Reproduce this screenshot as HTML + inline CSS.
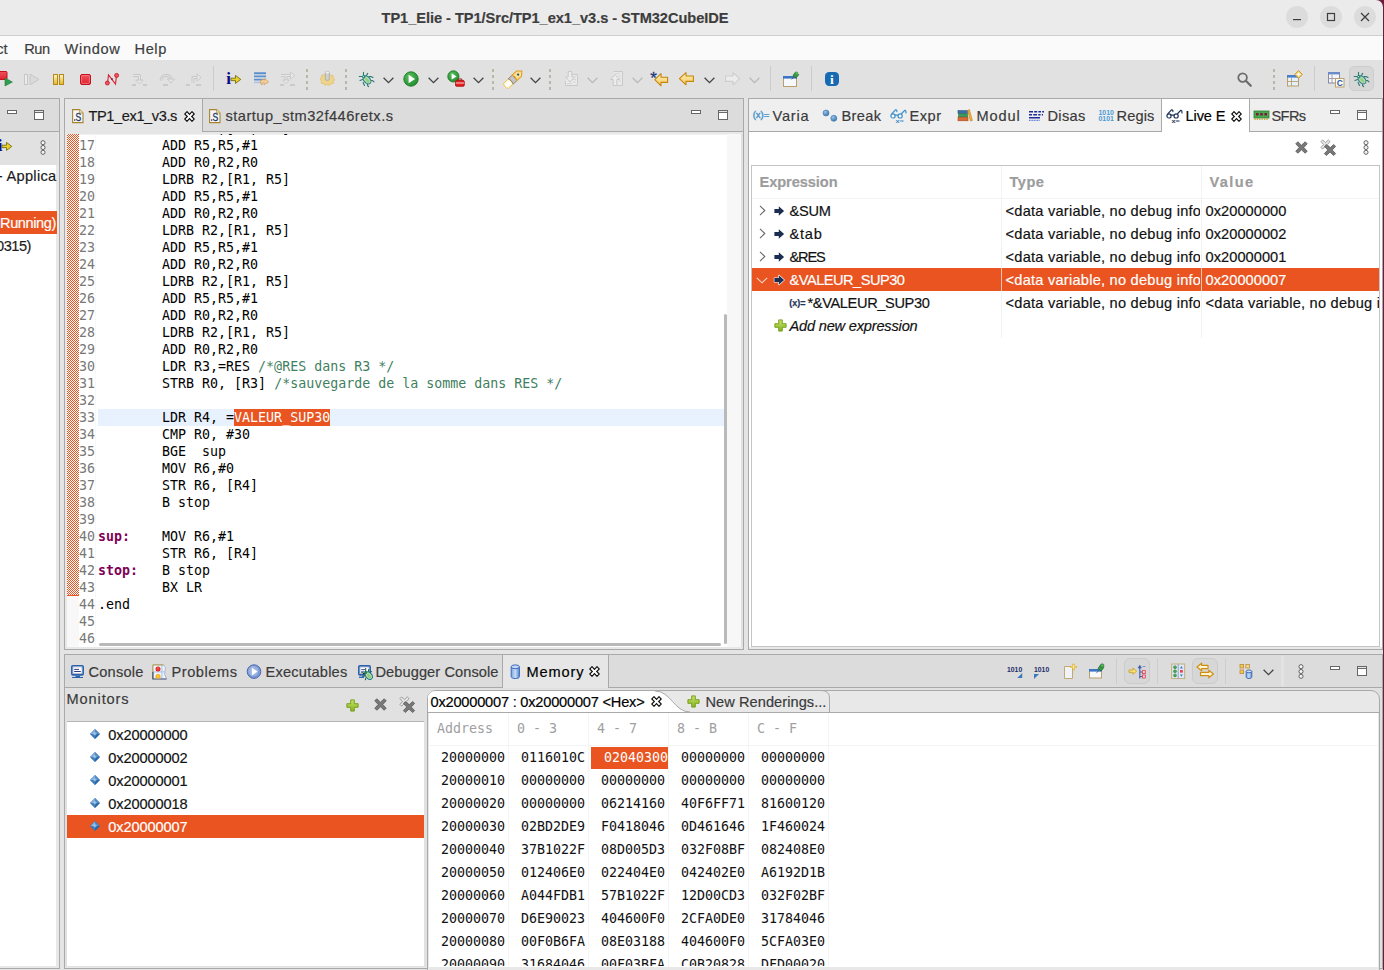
<!DOCTYPE html>
<html><head><meta charset="utf-8"><title>TP1_Elie - STM32CubeIDE</title><style>
html,body{margin:0;padding:0}
body{background:#6d1c3a;width:1384px;height:970px;overflow:hidden;font-family:'Liberation Sans', sans-serif}
#w{position:absolute;left:0;top:0;width:1384px;height:970px;overflow:hidden}
#w div,#w svg{position:absolute}
.t{white-space:pre;line-height:16px;height:16px;-webkit-text-stroke:.18px currentColor}
.cl{left:0;height:17px;line-height:17px;white-space:pre;font-family:'DejaVu Sans Mono', 'Liberation Mono', monospace;font-size:13.3px;color:#000}
.cl span{display:inline-block;height:17px;vertical-align:top}
.ln{width:16px;margin-left:12px;margin-right:3px;color:#787878}
.c{color:#3f7f5f} .l{color:#7f0055;font-weight:700} .w{color:#fff}
</style></head><body><div id="w">
<div style="left:0px;top:0px;width:1383px;height:36px;background:#ebebeb;border-top-right-radius:7px;"></div>
<div style="left:0px;top:35px;width:1383px;height:1px;background:#cfcfcf;"></div>
<div style="left:0px;top:36px;width:1383px;height:24px;background:#fafafa;"></div>
<div style="left:0px;top:60px;width:1383px;height:910px;background:#e4e4e4;"></div>
<div style="left:0px;top:60px;width:1383px;height:38px;background:#e1e1e1;"></div>
<div class="t" style="left:381.5px;top:10px;font-size:14.6px;color:#3d3d3d;font-weight:700;letter-spacing:-0.039px;">TP1_Elie - TP1/Src/TP1_ex1_v3.s - STM32CubeIDE</div>
<div style="left:1286px;top:6px;width:22px;height:22px;border-radius:11px;background:#dcdcdc"></div>
<div style="left:1320px;top:6px;width:22px;height:22px;border-radius:11px;background:#dcdcdc"></div>
<div style="left:1354px;top:6px;width:22px;height:22px;border-radius:11px;background:#dcdcdc"></div>
<svg style="left:1286px;top:6px" width="90" height="22" viewBox="0 0 90 22"><path d="M7 13.600H15" stroke="#3d3d3d" stroke-width="1.2" fill="none"/><rect x="41.5" y="7.5" width="7" height="7" stroke="#3d3d3d" stroke-width="1.2" fill="none"/><path d="M75 7L83 15M83 7L75 15" stroke="#3d3d3d" stroke-width="1.2" fill="none"/></svg>
<div class="t" style="left:-3.8px;top:41px;font-size:14.6px;color:#3d3d3d;">ct</div>
<div class="t" style="left:24.2px;top:41px;font-size:14.6px;color:#3d3d3d;letter-spacing:-0.394px;">Run</div>
<div class="t" style="left:64.5px;top:41px;font-size:14.6px;color:#3d3d3d;letter-spacing:0.682px;">Window</div>
<div class="t" style="left:134.6px;top:41px;font-size:14.6px;color:#3d3d3d;letter-spacing:0.546px;">Help</div>
<div style="left:-40px;top:98px;width:100px;height:871px;background:#e8e8e8;box-sizing:border-box;border:1px solid #a9a9a9;"></div>
<div style="left:-39px;top:99px;width:98px;height:32px;background:#dcdcdc;"></div>
<div style="left:-39px;top:131px;width:98px;height:1px;background:#a9a9a9;"></div>
<div style="left:-38px;top:132px;width:96px;height:33px;background:#e1e1e1;"></div>
<div style="left:-38px;top:165px;width:94px;height:801px;background:#fff;"></div>
<div style="left:64px;top:98px;width:680px;height:552px;background:#e8e8e8;box-sizing:border-box;border:1px solid #a9a9a9;"></div>
<div style="left:65px;top:99px;width:678px;height:32px;background:#dcdcdc;"></div>
<div style="left:65px;top:131px;width:678px;height:1px;background:#a9a9a9;"></div>
<div style="left:748px;top:98px;width:635px;height:552px;background:#e8e8e8;box-sizing:border-box;border:1px solid #a9a9a9;"></div>
<div style="left:749px;top:99px;width:633px;height:32px;background:#efefef;"></div>
<div style="left:749px;top:131px;width:633px;height:1px;background:#a9a9a9;"></div>
<div style="left:64px;top:654px;width:1319px;height:315px;background:#e8e8e8;box-sizing:border-box;border:1px solid #a9a9a9;"></div>
<div style="left:65px;top:655px;width:1317px;height:32px;background:#dcdcdc;"></div>
<div style="left:65px;top:687px;width:1317px;height:1px;background:#a9a9a9;"></div>
<div class="t" style="left:-2.2px;top:168px;font-size:14.6px;color:#1a1a1a;letter-spacing:0.291px;">- Applica</div>
<div style="left:0px;top:211px;width:57px;height:23px;background:#e95420;"></div>
<div class="t" style="left:0px;top:215px;font-size:14.6px;color:#fff;letter-spacing:-0.404px;">Running)</div>
<div class="t" style="left:-4px;top:238px;font-size:14.6px;color:#1a1a1a;letter-spacing:-0.466px;">0315)</div>
<div style="left:65px;top:99px;width:138px;height:35px;background:#e6e6e6;"></div>
<div style="left:202px;top:99px;width:1px;height:33px;background:#a9a9a9;"></div>
<div class="t" style="left:88.5px;top:108px;font-size:14.6px;color:#1a1a1a;letter-spacing:-0.400px;">TP1_ex1_v3.s</div>
<div class="t" style="left:225.5px;top:108px;font-size:14.6px;color:#3a3a3a;letter-spacing:0.497px;">startup_stm32f446retx.s</div>
<div style="left:67px;top:134px;width:675px;height:1px;background:#f1f1f1;"></div>
<div style="left:67px;top:135px;width:675px;height:512px;background:#fff;"></div>
<div style="left:67px;top:134px;width:12px;height:462px;background:#f4aa90;background-image:repeating-conic-gradient(#e95420 0% 25%, #fff 0% 50%);background-size:2px 2px;"></div>
<div style="left:67px;top:595px;width:12px;height:1px;background:#e95420;"></div>
<div style="left:67px;top:596px;width:12px;height:51px;background:#f8f8f8;"></div>
<div style="left:95px;top:135px;width:1px;height:512px;background:#f8f8f8;"></div>
<div style="left:727px;top:134px;width:14px;height:513px;background:#f7f7f7;"></div>
<div style="left:741px;top:134px;width:2px;height:513px;background:#e0e0e0;"></div>
<div style="left:98px;top:409px;width:629px;height:17px;background:#e8f2fe;"></div>
<div style="left:234px;top:409px;width:96px;height:17px;background:#e95420;"></div>
<div style="left:724px;top:314px;width:3px;height:330px;background:#b9b9b9;border-radius:2px;"></div>
<div style="left:99px;top:643px;width:622px;height:3px;background:#b9b9b9;border-radius:2px;"></div>
<div style="left:67px;top:134px;width:660px;height:513px;overflow:hidden">
<div class="cl" style="top:-14px"><span class="ln">16</span><span class="k">        LDRB R2,[R1, R5]</span></div>
<div class="cl" style="top:3px"><span class="ln">17</span><span class="k">        ADD R5,R5,#1</span></div>
<div class="cl" style="top:20px"><span class="ln">18</span><span class="k">        ADD R0,R2,R0</span></div>
<div class="cl" style="top:37px"><span class="ln">19</span><span class="k">        LDRB R2,[R1, R5]</span></div>
<div class="cl" style="top:54px"><span class="ln">20</span><span class="k">        ADD R5,R5,#1</span></div>
<div class="cl" style="top:71px"><span class="ln">21</span><span class="k">        ADD R0,R2,R0</span></div>
<div class="cl" style="top:88px"><span class="ln">22</span><span class="k">        LDRB R2,[R1, R5]</span></div>
<div class="cl" style="top:105px"><span class="ln">23</span><span class="k">        ADD R5,R5,#1</span></div>
<div class="cl" style="top:122px"><span class="ln">24</span><span class="k">        ADD R0,R2,R0</span></div>
<div class="cl" style="top:139px"><span class="ln">25</span><span class="k">        LDRB R2,[R1, R5]</span></div>
<div class="cl" style="top:156px"><span class="ln">26</span><span class="k">        ADD R5,R5,#1</span></div>
<div class="cl" style="top:173px"><span class="ln">27</span><span class="k">        ADD R0,R2,R0</span></div>
<div class="cl" style="top:190px"><span class="ln">28</span><span class="k">        LDRB R2,[R1, R5]</span></div>
<div class="cl" style="top:207px"><span class="ln">29</span><span class="k">        ADD R0,R2,R0</span></div>
<div class="cl" style="top:224px"><span class="ln">30</span><span class="k">        LDR R3,=RES </span><span class="c">/*@RES dans R3 */</span></div>
<div class="cl" style="top:241px"><span class="ln">31</span><span class="k">        STRB R0, [R3] </span><span class="c">/*sauvegarde de la somme dans RES */</span></div>
<div class="cl" style="top:258px"><span class="ln">32</span></div>
<div class="cl" style="top:275px"><span class="ln">33</span><span class="k">        LDR R4, =</span><span class="w">VALEUR_SUP30</span></div>
<div class="cl" style="top:292px"><span class="ln">34</span><span class="k">        CMP R0, #30</span></div>
<div class="cl" style="top:309px"><span class="ln">35</span><span class="k">        BGE  sup</span></div>
<div class="cl" style="top:326px"><span class="ln">36</span><span class="k">        MOV R6,#0</span></div>
<div class="cl" style="top:343px"><span class="ln">37</span><span class="k">        STR R6, [R4]</span></div>
<div class="cl" style="top:360px"><span class="ln">38</span><span class="k">        B stop</span></div>
<div class="cl" style="top:377px"><span class="ln">39</span></div>
<div class="cl" style="top:394px"><span class="ln">40</span><span class="l">sup:</span><span class="k">    MOV R6,#1</span></div>
<div class="cl" style="top:411px"><span class="ln">41</span><span class="k">        STR R6, [R4]</span></div>
<div class="cl" style="top:428px"><span class="ln">42</span><span class="l">stop:</span><span class="k">   B stop</span></div>
<div class="cl" style="top:445px"><span class="ln">43</span><span class="k">        BX LR</span></div>
<div class="cl" style="top:462px"><span class="ln">44</span><span class="k">.end</span></div>
<div class="cl" style="top:479px"><span class="ln">45</span></div>
<div class="cl" style="top:496px"><span class="ln">46</span></div>
</div>
<div style="left:1161px;top:99px;width:1px;height:33px;background:#a9a9a9;"></div>
<div style="left:1162px;top:99px;width:87px;height:35px;background:#fff;"></div>
<div style="left:1249px;top:99px;width:1px;height:33px;background:#a9a9a9;"></div>
<div style="left:749px;top:132px;width:633px;height:515px;background:#fff;"></div>
<div class="t" style="left:772.5px;top:108px;font-size:14.6px;color:#3a3a3a;letter-spacing:0.800px;">Varia</div>
<div class="t" style="left:841.5px;top:108px;font-size:14.6px;color:#3a3a3a;letter-spacing:0.375px;">Break</div>
<div class="t" style="left:909.5px;top:108px;font-size:14.6px;color:#3a3a3a;letter-spacing:0.496px;">Expr</div>
<div class="t" style="left:976.5px;top:108px;font-size:14.6px;color:#3a3a3a;letter-spacing:0.850px;">Modul</div>
<div class="t" style="left:1047.5px;top:108px;font-size:14.6px;color:#3a3a3a;letter-spacing:0.300px;">Disas</div>
<div class="t" style="left:1116.5px;top:108px;font-size:14.6px;color:#3a3a3a;letter-spacing:0.138px;">Regis</div>
<div class="t" style="left:1185.5px;top:108px;font-size:14.6px;color:#000;letter-spacing:-0.094px;">Live E</div>
<div class="t" style="left:1271.5px;top:108px;font-size:14.6px;color:#3a3a3a;letter-spacing:-0.621px;">SFRs</div>
<div style="left:751px;top:165px;width:629px;height:482px;background:#fff;box-sizing:border-box;border:1px solid #c4c4c4;"></div>
<div style="left:752px;top:198px;width:627px;height:1px;background:#f4f4f4;"></div>
<div style="left:1001px;top:166px;width:1px;height:172px;background:#f2f2f2;"></div>
<div style="left:1201px;top:166px;width:1px;height:172px;background:#f2f2f2;"></div>
<div class="t" style="left:759.5px;top:174px;font-size:14.6px;color:#9c9c9c;font-weight:700;letter-spacing:-0.069px;">Expression</div>
<div class="t" style="left:1009.5px;top:174px;font-size:14.6px;color:#9c9c9c;font-weight:700;letter-spacing:0.504px;">Type</div>
<div class="t" style="left:1209.5px;top:174px;font-size:14.6px;color:#9c9c9c;font-weight:700;letter-spacing:1.372px;">Value</div>
<div style="left:752px;top:268px;width:627px;height:23px;background:#e95420;"></div>
<div style="left:1001px;top:268px;width:1px;height:23px;background:#f6c3b0;"></div>
<div style="left:1201px;top:268px;width:1px;height:23px;background:#f6c3b0;"></div>
<div class="t" style="left:789.5px;top:203px;font-size:14.6px;color:#111;letter-spacing:-0.293px;">&amp;SUM</div>
<div style="left:1002px;top:199px;width:198px;height:23px;overflow:hidden">
<div class="t" style="left:3.5px;top:4px;font-size:14.6px;color:#111;letter-spacing:0.244px;">&lt;data variable, no debug info&gt;</div>
</div>
<div class="t" style="left:1205.5px;top:203px;font-size:14.6px;color:#111;letter-spacing:0.064px;">0x20000000</div>
<div class="t" style="left:789.5px;top:226px;font-size:14.6px;color:#111;letter-spacing:0.742px;">&amp;tab</div>
<div style="left:1002px;top:222px;width:198px;height:23px;overflow:hidden">
<div class="t" style="left:3.5px;top:4px;font-size:14.6px;color:#111;letter-spacing:0.244px;">&lt;data variable, no debug info&gt;</div>
</div>
<div class="t" style="left:1205.5px;top:226px;font-size:14.6px;color:#111;letter-spacing:0.064px;">0x20000002</div>
<div class="t" style="left:789.5px;top:249px;font-size:14.6px;color:#111;letter-spacing:-1.188px;">&amp;RES</div>
<div style="left:1002px;top:245px;width:198px;height:23px;overflow:hidden">
<div class="t" style="left:3.5px;top:4px;font-size:14.6px;color:#111;letter-spacing:0.244px;">&lt;data variable, no debug info&gt;</div>
</div>
<div class="t" style="left:1205.5px;top:249px;font-size:14.6px;color:#111;letter-spacing:0.064px;">0x20000001</div>
<div class="t" style="left:789.5px;top:272px;font-size:14.6px;color:#fff;letter-spacing:-0.493px;">&amp;VALEUR_SUP30</div>
<div style="left:1002px;top:268px;width:198px;height:23px;overflow:hidden">
<div class="t" style="left:3.5px;top:4px;font-size:14.6px;color:#fff;letter-spacing:0.244px;">&lt;data variable, no debug info&gt;</div>
</div>
<div class="t" style="left:1205.5px;top:272px;font-size:14.6px;color:#fff;letter-spacing:0.064px;">0x20000007</div>
<div class="t" style="left:807.5px;top:295px;font-size:14.6px;color:#111;letter-spacing:-0.364px;">*&amp;VALEUR_SUP30</div>
<div style="left:1002px;top:291px;width:198px;height:23px;overflow:hidden">
<div class="t" style="left:3.5px;top:4px;font-size:14.6px;color:#111;letter-spacing:0.244px;">&lt;data variable, no debug info&gt;</div>
</div>
<div style="left:1202px;top:291px;width:177px;height:23px;overflow:hidden">
<div class="t" style="left:3.5px;top:4px;font-size:14.6px;color:#111;letter-spacing:0.244px;">&lt;data variable, no debug info&gt;</div>
</div>
<div class="t" style="left:789.5px;top:318px;font-size:14.6px;color:#111;font-style:italic;letter-spacing:-0.191px;">Add new expression</div>
<div style="left:502px;top:655px;width:107px;height:33px;background:#e6e6e6;"></div>
<div style="left:502px;top:655px;width:1px;height:33px;background:#a9a9a9;"></div>
<div style="left:608px;top:655px;width:1px;height:33px;background:#a9a9a9;"></div>
<div class="t" style="left:88.5px;top:664px;font-size:14.6px;color:#3a3a3a;letter-spacing:0.208px;">Console</div>
<div class="t" style="left:171.5px;top:664px;font-size:14.6px;color:#3a3a3a;letter-spacing:0.545px;">Problems</div>
<div class="t" style="left:265.5px;top:664px;font-size:14.6px;color:#3a3a3a;letter-spacing:0.226px;">Executables</div>
<div class="t" style="left:375.5px;top:664px;font-size:14.6px;color:#3a3a3a;letter-spacing:0.081px;">Debugger Console</div>
<div class="t" style="left:526.5px;top:664px;font-size:14.6px;color:#000;letter-spacing:0.883px;">Memory</div>
<div style="left:65px;top:688px;width:1317px;height:279px;background:#e1e1e1;"></div>
<div class="t" style="left:66.5px;top:691px;font-size:14.6px;color:#3a3a3a;letter-spacing:0.879px;">Monitors</div>
<div style="left:67px;top:721px;width:357px;height:1px;background:#b4b4b4;"></div>
<div style="left:67px;top:722px;width:357px;height:244px;background:#fff;"></div>
<div style="left:67px;top:815px;width:357px;height:23px;background:#e95420;"></div>
<div class="t" style="left:108.2px;top:727px;font-size:14.6px;color:#111;letter-spacing:-0.096px;">0x20000000</div>
<div class="t" style="left:108.2px;top:750px;font-size:14.6px;color:#111;letter-spacing:-0.096px;">0x20000002</div>
<div class="t" style="left:108.2px;top:773px;font-size:14.6px;color:#111;letter-spacing:-0.096px;">0x20000001</div>
<div class="t" style="left:108.2px;top:796px;font-size:14.6px;color:#111;letter-spacing:-0.096px;">0x20000018</div>
<div class="t" style="left:108.2px;top:819px;font-size:14.6px;color:#fff;letter-spacing:-0.096px;">0x20000007</div>
<div style="left:427px;top:690px;width:953px;height:290px;background:#e8e8e8;box-sizing:border-box;border:1px solid #a9a9a9;border-radius:9px 9px 0 0"></div>
<div style="left:428px;top:712px;width:951px;height:1px;background:#a9a9a9;"></div>
<div style="left:429px;top:713px;width:949px;height:254px;background:#fff;"></div>
<svg style="left:428px;top:691px" width="264" height="22" viewBox="0 0 264 22"><path d="M0 21V8Q0 0 8 0H227C243 0 246 21 262 21Z" fill="#fff"/><path d="M227 0C243 0 246 21 262 21" fill="none" stroke="#a9a9a9"/></svg>
<svg style="left:670px;top:690px" width="170" height="23" viewBox="0 0 170 23"><path d="M159.500 22V8Q159.500 0.500 151 0.500" fill="none" stroke="#a9a9a9"/></svg>
<div class="t" style="left:430.5px;top:694px;font-size:14.6px;color:#000;letter-spacing:-0.204px;">0x20000007 : 0x20000007 &lt;Hex&gt;</div>
<div class="t" style="left:705.5px;top:694px;font-size:14.6px;color:#3a3a3a;letter-spacing:0.055px;">New Renderings...</div>
<div style="left:508px;top:713px;width:1px;height:254px;background:#f5f5f5;"></div>
<div style="left:588px;top:713px;width:1px;height:254px;background:#f5f5f5;"></div>
<div style="left:668px;top:713px;width:1px;height:254px;background:#f5f5f5;"></div>
<div style="left:748px;top:713px;width:1px;height:254px;background:#f5f5f5;"></div>
<div style="left:828px;top:713px;width:1px;height:254px;background:#f5f5f5;"></div>
<div style="left:429px;top:745px;width:949px;height:1px;background:#f4f4f4;"></div>
<div class="t" style="left:437px;top:720.5px;font-size:13.3px;color:#a0a0a0;font-family:'DejaVu Sans Mono', 'Liberation Mono', monospace;-webkit-text-stroke:0;">Address</div>
<div class="t" style="left:517px;top:720.5px;font-size:13.3px;color:#a0a0a0;font-family:'DejaVu Sans Mono', 'Liberation Mono', monospace;-webkit-text-stroke:0;">0 - 3</div>
<div class="t" style="left:597px;top:720.5px;font-size:13.3px;color:#a0a0a0;font-family:'DejaVu Sans Mono', 'Liberation Mono', monospace;-webkit-text-stroke:0;">4 - 7</div>
<div class="t" style="left:677px;top:720.5px;font-size:13.3px;color:#a0a0a0;font-family:'DejaVu Sans Mono', 'Liberation Mono', monospace;-webkit-text-stroke:0;">8 - B</div>
<div class="t" style="left:757px;top:720.5px;font-size:13.3px;color:#a0a0a0;font-family:'DejaVu Sans Mono', 'Liberation Mono', monospace;-webkit-text-stroke:0;">C - F</div>
<div style="left:591px;top:747px;width:77px;height:22px;background:#e95420;"></div>
<div style="left:429px;top:713px;width:950px;height:253px;overflow:hidden">
<div class="t" style="left:12px;top:36.5px;font-size:13.3px;color:#111;font-family:'DejaVu Sans Mono', 'Liberation Mono', monospace;-webkit-text-stroke:0;">20000000</div>
<div class="t" style="left:92px;top:36.5px;font-size:13.3px;color:#111;font-family:'DejaVu Sans Mono', 'Liberation Mono', monospace;-webkit-text-stroke:0;">0116010C</div>
<div class="t" style="left:175px;top:36.5px;font-size:13.3px;color:#fff;font-family:'DejaVu Sans Mono', 'Liberation Mono', monospace;-webkit-text-stroke:0;">02040300</div>
<div class="t" style="left:252px;top:36.5px;font-size:13.3px;color:#111;font-family:'DejaVu Sans Mono', 'Liberation Mono', monospace;-webkit-text-stroke:0;">00000000</div>
<div class="t" style="left:332px;top:36.5px;font-size:13.3px;color:#111;font-family:'DejaVu Sans Mono', 'Liberation Mono', monospace;-webkit-text-stroke:0;">00000000</div>
<div class="t" style="left:12px;top:59.5px;font-size:13.3px;color:#111;font-family:'DejaVu Sans Mono', 'Liberation Mono', monospace;-webkit-text-stroke:0;">20000010</div>
<div class="t" style="left:92px;top:59.5px;font-size:13.3px;color:#111;font-family:'DejaVu Sans Mono', 'Liberation Mono', monospace;-webkit-text-stroke:0;">00000000</div>
<div class="t" style="left:172px;top:59.5px;font-size:13.3px;color:#111;font-family:'DejaVu Sans Mono', 'Liberation Mono', monospace;-webkit-text-stroke:0;">00000000</div>
<div class="t" style="left:252px;top:59.5px;font-size:13.3px;color:#111;font-family:'DejaVu Sans Mono', 'Liberation Mono', monospace;-webkit-text-stroke:0;">00000000</div>
<div class="t" style="left:332px;top:59.5px;font-size:13.3px;color:#111;font-family:'DejaVu Sans Mono', 'Liberation Mono', monospace;-webkit-text-stroke:0;">00000000</div>
<div class="t" style="left:12px;top:82.5px;font-size:13.3px;color:#111;font-family:'DejaVu Sans Mono', 'Liberation Mono', monospace;-webkit-text-stroke:0;">20000020</div>
<div class="t" style="left:92px;top:82.5px;font-size:13.3px;color:#111;font-family:'DejaVu Sans Mono', 'Liberation Mono', monospace;-webkit-text-stroke:0;">00000000</div>
<div class="t" style="left:172px;top:82.5px;font-size:13.3px;color:#111;font-family:'DejaVu Sans Mono', 'Liberation Mono', monospace;-webkit-text-stroke:0;">06214160</div>
<div class="t" style="left:252px;top:82.5px;font-size:13.3px;color:#111;font-family:'DejaVu Sans Mono', 'Liberation Mono', monospace;-webkit-text-stroke:0;">40F6FF71</div>
<div class="t" style="left:332px;top:82.5px;font-size:13.3px;color:#111;font-family:'DejaVu Sans Mono', 'Liberation Mono', monospace;-webkit-text-stroke:0;">81600120</div>
<div class="t" style="left:12px;top:105.5px;font-size:13.3px;color:#111;font-family:'DejaVu Sans Mono', 'Liberation Mono', monospace;-webkit-text-stroke:0;">20000030</div>
<div class="t" style="left:92px;top:105.5px;font-size:13.3px;color:#111;font-family:'DejaVu Sans Mono', 'Liberation Mono', monospace;-webkit-text-stroke:0;">02BD2DE9</div>
<div class="t" style="left:172px;top:105.5px;font-size:13.3px;color:#111;font-family:'DejaVu Sans Mono', 'Liberation Mono', monospace;-webkit-text-stroke:0;">F0418046</div>
<div class="t" style="left:252px;top:105.5px;font-size:13.3px;color:#111;font-family:'DejaVu Sans Mono', 'Liberation Mono', monospace;-webkit-text-stroke:0;">0D461646</div>
<div class="t" style="left:332px;top:105.5px;font-size:13.3px;color:#111;font-family:'DejaVu Sans Mono', 'Liberation Mono', monospace;-webkit-text-stroke:0;">1F460024</div>
<div class="t" style="left:12px;top:128.5px;font-size:13.3px;color:#111;font-family:'DejaVu Sans Mono', 'Liberation Mono', monospace;-webkit-text-stroke:0;">20000040</div>
<div class="t" style="left:92px;top:128.5px;font-size:13.3px;color:#111;font-family:'DejaVu Sans Mono', 'Liberation Mono', monospace;-webkit-text-stroke:0;">37B1022F</div>
<div class="t" style="left:172px;top:128.5px;font-size:13.3px;color:#111;font-family:'DejaVu Sans Mono', 'Liberation Mono', monospace;-webkit-text-stroke:0;">08D005D3</div>
<div class="t" style="left:252px;top:128.5px;font-size:13.3px;color:#111;font-family:'DejaVu Sans Mono', 'Liberation Mono', monospace;-webkit-text-stroke:0;">032F08BF</div>
<div class="t" style="left:332px;top:128.5px;font-size:13.3px;color:#111;font-family:'DejaVu Sans Mono', 'Liberation Mono', monospace;-webkit-text-stroke:0;">082408E0</div>
<div class="t" style="left:12px;top:151.5px;font-size:13.3px;color:#111;font-family:'DejaVu Sans Mono', 'Liberation Mono', monospace;-webkit-text-stroke:0;">20000050</div>
<div class="t" style="left:92px;top:151.5px;font-size:13.3px;color:#111;font-family:'DejaVu Sans Mono', 'Liberation Mono', monospace;-webkit-text-stroke:0;">012406E0</div>
<div class="t" style="left:172px;top:151.5px;font-size:13.3px;color:#111;font-family:'DejaVu Sans Mono', 'Liberation Mono', monospace;-webkit-text-stroke:0;">022404E0</div>
<div class="t" style="left:252px;top:151.5px;font-size:13.3px;color:#111;font-family:'DejaVu Sans Mono', 'Liberation Mono', monospace;-webkit-text-stroke:0;">042402E0</div>
<div class="t" style="left:332px;top:151.5px;font-size:13.3px;color:#111;font-family:'DejaVu Sans Mono', 'Liberation Mono', monospace;-webkit-text-stroke:0;">A6192D1B</div>
<div class="t" style="left:12px;top:174.5px;font-size:13.3px;color:#111;font-family:'DejaVu Sans Mono', 'Liberation Mono', monospace;-webkit-text-stroke:0;">20000060</div>
<div class="t" style="left:92px;top:174.5px;font-size:13.3px;color:#111;font-family:'DejaVu Sans Mono', 'Liberation Mono', monospace;-webkit-text-stroke:0;">A044FDB1</div>
<div class="t" style="left:172px;top:174.5px;font-size:13.3px;color:#111;font-family:'DejaVu Sans Mono', 'Liberation Mono', monospace;-webkit-text-stroke:0;">57B1022F</div>
<div class="t" style="left:252px;top:174.5px;font-size:13.3px;color:#111;font-family:'DejaVu Sans Mono', 'Liberation Mono', monospace;-webkit-text-stroke:0;">12D00CD3</div>
<div class="t" style="left:332px;top:174.5px;font-size:13.3px;color:#111;font-family:'DejaVu Sans Mono', 'Liberation Mono', monospace;-webkit-text-stroke:0;">032F02BF</div>
<div class="t" style="left:12px;top:197.5px;font-size:13.3px;color:#111;font-family:'DejaVu Sans Mono', 'Liberation Mono', monospace;-webkit-text-stroke:0;">20000070</div>
<div class="t" style="left:92px;top:197.5px;font-size:13.3px;color:#111;font-family:'DejaVu Sans Mono', 'Liberation Mono', monospace;-webkit-text-stroke:0;">D6E90023</div>
<div class="t" style="left:172px;top:197.5px;font-size:13.3px;color:#111;font-family:'DejaVu Sans Mono', 'Liberation Mono', monospace;-webkit-text-stroke:0;">404600F0</div>
<div class="t" style="left:252px;top:197.5px;font-size:13.3px;color:#111;font-family:'DejaVu Sans Mono', 'Liberation Mono', monospace;-webkit-text-stroke:0;">2CFA0DE0</div>
<div class="t" style="left:332px;top:197.5px;font-size:13.3px;color:#111;font-family:'DejaVu Sans Mono', 'Liberation Mono', monospace;-webkit-text-stroke:0;">31784046</div>
<div class="t" style="left:12px;top:220.5px;font-size:13.3px;color:#111;font-family:'DejaVu Sans Mono', 'Liberation Mono', monospace;-webkit-text-stroke:0;">20000080</div>
<div class="t" style="left:92px;top:220.5px;font-size:13.3px;color:#111;font-family:'DejaVu Sans Mono', 'Liberation Mono', monospace;-webkit-text-stroke:0;">00F0B6FA</div>
<div class="t" style="left:172px;top:220.5px;font-size:13.3px;color:#111;font-family:'DejaVu Sans Mono', 'Liberation Mono', monospace;-webkit-text-stroke:0;">08E03188</div>
<div class="t" style="left:252px;top:220.5px;font-size:13.3px;color:#111;font-family:'DejaVu Sans Mono', 'Liberation Mono', monospace;-webkit-text-stroke:0;">404600F0</div>
<div class="t" style="left:332px;top:220.5px;font-size:13.3px;color:#111;font-family:'DejaVu Sans Mono', 'Liberation Mono', monospace;-webkit-text-stroke:0;">5CFA03E0</div>
<div class="t" style="left:12px;top:243.5px;font-size:13.3px;color:#111;font-family:'DejaVu Sans Mono', 'Liberation Mono', monospace;-webkit-text-stroke:0;">20000090</div>
<div class="t" style="left:92px;top:243.5px;font-size:13.3px;color:#111;font-family:'DejaVu Sans Mono', 'Liberation Mono', monospace;-webkit-text-stroke:0;">31684046</div>
<div class="t" style="left:172px;top:243.5px;font-size:13.3px;color:#111;font-family:'DejaVu Sans Mono', 'Liberation Mono', monospace;-webkit-text-stroke:0;">00F03BFA</div>
<div class="t" style="left:252px;top:243.5px;font-size:13.3px;color:#111;font-family:'DejaVu Sans Mono', 'Liberation Mono', monospace;-webkit-text-stroke:0;">C0B20828</div>
<div class="t" style="left:332px;top:243.5px;font-size:13.3px;color:#111;font-family:'DejaVu Sans Mono', 'Liberation Mono', monospace;-webkit-text-stroke:0;">DFD00020</div>
</div>
<svg width="0" height="0" style="left:0;top:0"><defs>
<linearGradient id="gy" x1="0" y1="0" x2="0" y2="1"><stop offset="0" stop-color="#fff6cf"/><stop offset="1" stop-color="#e6b422"/></linearGradient>
<linearGradient id="gr" x1="0" y1="0" x2="0" y2="1"><stop offset="0" stop-color="#f0535c"/><stop offset="1" stop-color="#dd2230"/></linearGradient>
<radialGradient id="gg" cx="0.4" cy="0.35" r="0.7"><stop offset="0" stop-color="#5cc060"/><stop offset="1" stop-color="#1e8a2c"/></radialGradient>
<linearGradient id="ga" x1="0" y1="0" x2="0" y2="1"><stop offset="0" stop-color="#fff3c4"/><stop offset="1" stop-color="#f4c552"/></linearGradient>
<linearGradient id="gb" x1="0" y1="0" x2="1" y2="0"><stop offset="0" stop-color="#7aa7e0"/><stop offset="0.5" stop-color="#c8dcf6"/><stop offset="1" stop-color="#5a88cc"/></linearGradient>
<linearGradient id="gp" x1="0" y1="0" x2="0" y2="1"><stop offset="0" stop-color="#c6e36a"/><stop offset="1" stop-color="#86b41e"/></linearGradient>
<radialGradient id="gd" cx="0.35" cy="0.3" r="0.8"><stop offset="0" stop-color="#9cc4ea"/><stop offset="1" stop-color="#2f6eaa"/></radialGradient>
</defs></svg>
<svg style="left:7px;top:110px" width="10" height="4" viewBox="0 0 10 4"><rect x=".5" y=".5" width="9" height="3" fill="#fff" stroke="#666"/></svg>
<svg style="left:34px;top:110px" width="10" height="10" viewBox="0 0 10 10"><rect x=".5" y=".5" width="9" height="9" fill="#fff" stroke="#666"/><path d="M1 2.500H9" stroke="#6a6a6a"/><path d="M1 1.500H9" stroke="#e6e6e6"/></svg>
<svg style="left:39.5px;top:140px" width="6" height="15" viewBox="0 0 6 15"><g fill="#f4f4f4" stroke="#555" stroke-width=".9"><circle cx="3" cy="2.700" r="2.050"/><circle cx="3" cy="7.500" r="2.050"/><circle cx="3" cy="12.300" r="2.050"/></g></svg>
<svg style="left:691px;top:110px" width="10" height="4" viewBox="0 0 10 4"><rect x=".5" y=".5" width="9" height="3" fill="#fff" stroke="#666"/></svg>
<svg style="left:718px;top:110px" width="10" height="10" viewBox="0 0 10 10"><rect x=".5" y=".5" width="9" height="9" fill="#fff" stroke="#666"/><path d="M1 2.500H9" stroke="#6a6a6a"/><path d="M1 1.500H9" stroke="#e6e6e6"/></svg>
<svg style="left:1330px;top:110px" width="10" height="4" viewBox="0 0 10 4"><rect x=".5" y=".5" width="9" height="3" fill="#fff" stroke="#666"/></svg>
<svg style="left:1357px;top:110px" width="10" height="10" viewBox="0 0 10 10"><rect x=".5" y=".5" width="9" height="9" fill="#fff" stroke="#666"/><path d="M1 2.500H9" stroke="#6a6a6a"/><path d="M1 1.500H9" stroke="#e6e6e6"/></svg>
<svg style="left:1330px;top:666px" width="10" height="4" viewBox="0 0 10 4"><rect x=".5" y=".5" width="9" height="3" fill="#fff" stroke="#666"/></svg>
<svg style="left:1357px;top:666px" width="10" height="10" viewBox="0 0 10 10"><rect x=".5" y=".5" width="9" height="9" fill="#fff" stroke="#666"/><path d="M1 2.500H9" stroke="#6a6a6a"/><path d="M1 1.500H9" stroke="#e6e6e6"/></svg>
<svg style="left:183.5px;top:110.5px" width="11" height="11" viewBox="0 0 11 11"><path d="M3 .700L5.500 3.300 8 .700 10.300 3 7.700 5.500 10.300 8 8 10.300 5.500 7.700 3 10.300 .700 8 3.300 5.500 .700 3Z" fill="#fff" stroke="#0a0a0a" stroke-width="1.150" stroke-linejoin="miter"/></svg>
<svg style="left:1230.5px;top:110.5px" width="11" height="11" viewBox="0 0 11 11"><path d="M3 .700L5.500 3.300 8 .700 10.300 3 7.700 5.500 10.300 8 8 10.300 5.500 7.700 3 10.300 .700 8 3.300 5.500 .700 3Z" fill="#fff" stroke="#0a0a0a" stroke-width="1.150" stroke-linejoin="miter"/></svg>
<svg style="left:589.4px;top:666.4px" width="11" height="11" viewBox="0 0 11 11"><path d="M3 .700L5.500 3.300 8 .700 10.300 3 7.700 5.500 10.300 8 8 10.300 5.500 7.700 3 10.300 .700 8 3.300 5.500 .700 3Z" fill="#fff" stroke="#0a0a0a" stroke-width="1.150" stroke-linejoin="miter"/></svg>
<svg style="left:650.5px;top:696px" width="11" height="11" viewBox="0 0 11 11"><path d="M3 .700L5.500 3.300 8 .700 10.300 3 7.700 5.500 10.300 8 8 10.300 5.500 7.700 3 10.300 .700 8 3.300 5.500 .700 3Z" fill="#fff" stroke="#0a0a0a" stroke-width="1.150" stroke-linejoin="miter"/></svg>
<svg style="left:1362.5px;top:140px" width="6" height="15" viewBox="0 0 6 15"><g fill="#f4f4f4" stroke="#555" stroke-width=".9"><circle cx="3" cy="2.700" r="2.050"/><circle cx="3" cy="7.500" r="2.050"/><circle cx="3" cy="12.300" r="2.050"/></g></svg>
<svg style="left:1298.4px;top:664px" width="6" height="15" viewBox="0 0 6 15"><g fill="#f4f4f4" stroke="#555" stroke-width=".9"><circle cx="3" cy="2.700" r="2.050"/><circle cx="3" cy="7.500" r="2.050"/><circle cx="3" cy="12.300" r="2.050"/></g></svg>
<svg style="left:0px;top:70px" width="14" height="18" viewBox="0 0 14 18"><rect x="-3" y="1.5" width="10" height="8" rx="1" fill="url(#gr)" stroke="#c4101f"/><path d="M5 8L12.4 12 5 16Z" fill="#2f9e4e" stroke="#1e7a3a" stroke-width=".6"/></svg>
<svg style="left:23px;top:73px" width="18" height="13" viewBox="0 0 18 13"><rect x="1.5" y="1.5" width="3" height="10" fill="#ececec" stroke="#c6c6c6"/><path d="M7 1.2L16 6.5 7 11.8Z" fill="#dadada" stroke="#c6c6c6"/></svg>
<svg style="left:52px;top:73px" width="13" height="13" viewBox="0 0 13 13"><rect x="1.5" y="1.5" width="4" height="10" fill="url(#gy)" stroke="#b58a14"/><rect x="7.5" y="1.5" width="4" height="10" fill="url(#gy)" stroke="#b58a14"/></svg>
<svg style="left:79px;top:73px" width="13" height="13" viewBox="0 0 13 13"><rect x="1.5" y="1.5" width="10" height="10" rx="1.5" fill="url(#gr)" stroke="#c4101f"/><rect x="2.6" y="2.6" width="7.8" height="7.8" rx="1" fill="none" stroke="#f58a90" stroke-width=".7"/></svg>
<svg style="left:104px;top:72px" width="16" height="14" viewBox="0 0 16 14"><path d="M3.500 11L4.500 3 11.500 12 12.500 3.500" fill="none" stroke="#d42032" stroke-width="1.100"/><path d="M6.800 6.600H9.400L8 8.200Z" fill="#7a1020"/><circle cx="3.400" cy="11" r="2" fill="#ee5560" stroke="#c4101f" stroke-width=".8"/><circle cx="12.600" cy="3.400" r="2" fill="#ee5560" stroke="#c4101f" stroke-width=".8"/></svg>
<svg style="left:131px;top:72px" width="17" height="15" viewBox="0 0 17 15"><path d="M2 3.500H8.500V8.500" fill="none" stroke="#c6c6c6" stroke-width="2.800" stroke-linejoin="round"/><path d="M2 3.500H8.500V8.500" fill="none" stroke="#e9e9e9" stroke-width="1"/><path d="M4.800 8H12.200L8.500 12Z" fill="#e6e6e6" stroke="#c6c6c6" stroke-width=".9" stroke-linejoin="round"/><path d="M1 13H5M12 13H16" stroke="#c2c2c2" stroke-width="1.500"/></svg>
<svg style="left:158px;top:72px" width="17" height="15" viewBox="0 0 17 15"><path d="M3 8.500C3 2 13 2 13 7.500" fill="none" stroke="#c6c6c6" stroke-width="2.800" stroke-linejoin="round"/><path d="M3 8.500C3 2 13 2 13 7.500" fill="none" stroke="#e9e9e9" stroke-width="1"/><path d="M9.400 7H16.600L13 11Z" fill="#e6e6e6" stroke="#c6c6c6" stroke-width=".9" stroke-linejoin="round"/><path d="M5 13H10" stroke="#c2c2c2" stroke-width="1.500"/></svg>
<svg style="left:185px;top:72px" width="17" height="15" viewBox="0 0 17 15"><path d="M8 11V5.500H12.500" fill="none" stroke="#c6c6c6" stroke-width="2.800" stroke-linejoin="round"/><path d="M8 11V5.500H12.500" fill="none" stroke="#e9e9e9" stroke-width="1"/><path d="M12 1.800V9.200L16.200 5.500Z" fill="#e6e6e6" stroke="#c6c6c6" stroke-width=".9" stroke-linejoin="round"/><path d="M1 13H5M11 13H16" stroke="#c2c2c2" stroke-width="1.500"/></svg>
<div style="left:213px;top:66px;width:1px;height:25px;background:#cbcbcb"></div>
<svg style="left:224px;top:70px" width="19" height="17" viewBox="0 0 19 17"><text x="2.200" y="14.300" font-family="Liberation Serif, serif" font-size="17" font-weight="700" fill="#0a0a8c">i</text><path d="M7 8.200H11.500V5.400L16.800 9.400 11.500 13.400V10.600H7Z" fill="#e6d22a" stroke="#6e5f00" stroke-width=".8" stroke-linejoin="round"/></svg>
<svg style="left:253px;top:71px" width="18" height="16" viewBox="0 0 18 16"><path d="M1 2.2H13M1 5.4H13M1 8.6H13" stroke="#5d8fce" stroke-width="1.9"/><path d="M1 11.4H8" stroke="#a9c4e6" stroke-width="1.5"/><path d="M7.6 11C7.6 8.6 10 8 11.4 9.2L12 7.6 15.6 11 11 13.6 11.2 12C9.4 11.4 8.6 12.4 9 14.2 7.8 13.4 7.6 12.2 7.6 11Z" fill="#f3cf9c" stroke="#cf9f5c" stroke-width=".8" stroke-linejoin="round"/></svg>
<svg style="left:279px;top:71px" width="18" height="16" viewBox="0 0 18 16"><path d="M2 4.500H11.500" fill="none" stroke="#c6c6c6" stroke-width="2.800" stroke-linejoin="round"/><path d="M2 4.500H11.500" fill="none" stroke="#e9e9e9" stroke-width="1"/><path d="M11.400 1V8L15.800 4.500Z" fill="#e9e9e9" stroke="#c6c6c6" stroke-width=".9" stroke-linejoin="round"/><path d="M7 5V9.500" fill="none" stroke="#c6c6c6" stroke-width="2.800" stroke-linejoin="round"/><path d="M7 5V9.500" fill="none" stroke="#e9e9e9" stroke-width="1"/><path d="M3.600 9H10.400L7 12.600Z" fill="#e9e9e9" stroke="#c6c6c6" stroke-width=".9" stroke-linejoin="round"/><path d="M1 14H5M11 14H16" stroke="#c2c2c2" stroke-width="1.400"/></svg>
<div style="left:306.3px;top:68.5px;width:1.3px;height:21px;background:repeating-linear-gradient(#9c9278 0 3px,transparent 3px 6px);opacity:.55"></div>
<svg style="left:319px;top:70px" width="17" height="17" viewBox="0 0 17 17"><path d="M8 5.2L10 3.8 11.8 5.4 14 5.4 14.2 7.8 15.8 9.4 14.4 11.4 14.4 13.4 12 13.8 10.4 15.4 8.2 14.4 6 15.4 4.6 13.6 2.2 13.2 2.4 10.8 1 9 2.6 7.2 2.8 5 5.2 5 6.6 3.6Z" fill="#eed38a" stroke="#e3c26c" stroke-width=".8"/><rect x="6.3" y="1.4" width="4" height="9" rx="1.6" fill="#d0d0d0" stroke="#a8a8a8" stroke-width=".8"/><ellipse cx="8.3" cy="2.6" rx="1.8" ry="1" fill="#eee"/></svg>
<div style="left:345.3px;top:68.5px;width:1.3px;height:21px;background:repeating-linear-gradient(#9c9278 0 3px,transparent 3px 6px);opacity:.55"></div>
<svg style="left:358px;top:71px" width="17" height="17" viewBox="0 0 17 17"><g stroke="#2f7d68" stroke-width="1.100" fill="none" stroke-linecap="round" stroke-linejoin="round"><path d="M5.500 4.500V1.200M8.400 4.600L9.700 2.400M4 5.500H1.200M11 5.600H13L15 6.500M4.500 8.600L2 9.500M13.300 9.500H14.500L16 10.800M5.200 11.300L5.500 12.600 6.500 14.500M9.500 13.400V14.500L10.700 15.700"/></g><ellipse cx="9" cy="8.900" rx="3.100" ry="4.700" transform="rotate(-42 9 8.900)" fill="#b9dcae" stroke="#2a7f9a" stroke-width="1.050"/><ellipse cx="9.300" cy="9.300" rx="1.300" ry="2.800" transform="rotate(-42 9.300 9.300)" fill="#8fcf78"/><circle cx="5.800" cy="5.800" r="1.400" fill="#3f9a55" stroke="#1d7a9c" stroke-width=".7"/><circle cx="5.500" cy="5.500" r=".500" fill="#e8f8e0"/></svg>
<svg style="left:383px;top:76.5px" width="11" height="7" viewBox="0 0 11 7"><path d="M.6 .8L5.5 5.6 10.4 .8" fill="none" stroke="#444" stroke-width="1.3"/></svg>
<svg style="left:403px;top:71px" width="16" height="16" viewBox="0 0 16 16"><circle cx="8" cy="8" r="7.2" fill="url(#gg)" stroke="#1a7a26" stroke-width=".9"/><path d="M5.6 3.8L12 8 5.6 12.2Z" fill="#fff"/></svg>
<svg style="left:428px;top:76.5px" width="11" height="7" viewBox="0 0 11 7"><path d="M.6 .8L5.5 5.6 10.4 .8" fill="none" stroke="#444" stroke-width="1.3"/></svg>
<svg style="left:447px;top:70px" width="18" height="17" viewBox="0 0 18 17"><circle cx="6.4" cy="6.4" r="5.6" fill="url(#gg)" stroke="#1a7a26" stroke-width=".9"/><path d="M4.6 3.2L9.6 6.4 4.6 9.6Z" fill="#fff"/><rect x="8.6" y="10.6" width="8.6" height="5.6" rx=".8" fill="#e52222" stroke="#a80c0c" stroke-width=".9"/><path d="M11 10.4V9H14.8V10.4" fill="none" stroke="#a80c0c" stroke-width="1"/><path d="M8.8 13H17" stroke="#fff" stroke-width=".8"/></svg>
<svg style="left:473px;top:76.5px" width="11" height="7" viewBox="0 0 11 7"><path d="M.6 .8L5.5 5.6 10.4 .8" fill="none" stroke="#444" stroke-width="1.3"/></svg>
<div style="left:492.3px;top:68.5px;width:1.3px;height:21px;background:repeating-linear-gradient(#9c9278 0 3px,transparent 3px 6px);opacity:.55"></div>
<svg style="left:500px;top:68px" width="26" height="22" viewBox="0 0 26 22"><g transform="translate(5.200 18.600) rotate(-43)"><path d="M1 -3.400H8V3.400H1C-.600 2 -.600 -2 1 -3.400Z" fill="#fffbe8" stroke="#f0c040" stroke-width=".9"/><path d="M1.500 -1.500H7V1.500H1.500Z" fill="#fff"/><path d="M7.500 -3.600H13V3.600H7.500Q9.500 0 7.500 -3.600Z" fill="#c4c4d0" stroke="#8a7444" stroke-width=".8"/><path d="M12.600 -3.600H19L22.800 0 19 3.600H12.600Q14.600 0 12.600 -3.600Z" fill="#fbe08c" stroke="#e09a1c" stroke-width="1"/><circle cx="17.600" cy="0" r="1.100" fill="#2a4a9a"/></g></svg>
<svg style="left:530px;top:76.5px" width="11" height="7" viewBox="0 0 11 7"><path d="M.6 .8L5.5 5.6 10.4 .8" fill="none" stroke="#444" stroke-width="1.3"/></svg>
<div style="left:549.3px;top:68.5px;width:1.3px;height:21px;background:repeating-linear-gradient(#9c9278 0 3px,transparent 3px 6px);opacity:.55"></div>
<svg style="left:562px;top:70px" width="17" height="17" viewBox="0 0 17 17"><path d="M6.5 4.5H15.5V15.5H3.5V11" fill="#e9e9e9" stroke="#c9c9c9"/><path d="M6.2 1.5H9.8V7H12.4L8 12 3.6 7H6.2Z" fill="#ececec" stroke="#c9c9c9" stroke-linejoin="round"/><path d="M5 13.5H10M11 7H14M11 9.5H14M11 12H14" stroke="#d6d6d6"/></svg>
<svg style="left:587px;top:76.5px" width="11" height="7" viewBox="0 0 11 7"><path d="M.6 .8L5.5 5.6 10.4 .8" fill="none" stroke="#b9b9b9" stroke-width="1.3"/></svg>
<svg style="left:607px;top:70px" width="17" height="17" viewBox="0 0 17 17"><path d="M6.5 1.5H15.5V15.5H8.5" fill="#e9e9e9" stroke="#c9c9c9"/><path d="M6.2 15.5H9.8V9.5H12.4L8 4.5 3.6 9.5H6.2Z" fill="#ececec" stroke="#c9c9c9" stroke-linejoin="round"/><path d="M8 3.5H13M11 6H14M11 8.500H14M11.5 11H14" stroke="#d6d6d6"/></svg>
<svg style="left:632px;top:76.5px" width="11" height="7" viewBox="0 0 11 7"><path d="M.6 .8L5.5 5.6 10.4 .8" fill="none" stroke="#b9b9b9" stroke-width="1.3"/></svg>
<svg style="left:650px;top:70px" width="19" height="17" viewBox="0 0 19 17"><path d="M4.8 9.6L11 3.6V7.2H17.6V12.4H11V15.8Z" fill="url(#ga)" stroke="#c4860c" stroke-width="1.1" stroke-linejoin="round"/><text x=".200" y="14.200" font-family="Liberation Sans, sans-serif" font-size="17" font-weight="400" fill="#1d3b7a" stroke="#1d3b7a" stroke-width=".300">*</text></svg>
<svg style="left:678px;top:71px" width="17" height="15" viewBox="0 0 17 15"><path d="M1.4 7.6L8 1.6V5H15.4V10.4H8V13.8Z" fill="url(#ga)" stroke="#c4860c" stroke-width="1.1" stroke-linejoin="round"/></svg>
<svg style="left:704px;top:76.5px" width="11" height="7" viewBox="0 0 11 7"><path d="M.6 .8L5.5 5.6 10.4 .8" fill="none" stroke="#444" stroke-width="1.3"/></svg>
<svg style="left:724px;top:71px" width="17" height="15" viewBox="0 0 17 15"><path d="M15.6 7.6L9 1.6V5H1.6V10.4H9V13.8Z" fill="#ececec" stroke="#cdcdcd" stroke-width="1.1" stroke-linejoin="round"/></svg>
<svg style="left:749px;top:76.5px" width="11" height="7" viewBox="0 0 11 7"><path d="M.6 .8L5.5 5.6 10.4 .8" fill="none" stroke="#b9b9b9" stroke-width="1.3"/></svg>
<div style="left:770px;top:66px;width:1px;height:25px;background:#cbcbcb"></div>
<svg style="left:782px;top:70px" width="18" height="18" viewBox="0 0 18 18"><rect x="1.5" y="6.500" width="13" height="10" fill="#f6f8fc" stroke="#b9a06a"/><rect x="1" y="6" width="14" height="2.600" fill="#3a76c2"/><path d="M9.600 9.400L11.800 7.200" stroke="#555" stroke-width=".9"/><path d="M11 5.400L13.600 2 16.800 4.600 14 8Z" fill="#3c9a44" stroke="#1e6e2a" stroke-width=".8" stroke-linejoin="round"/><circle cx="14.800" cy="3" r="1.500" fill="#54b45c"/></svg>
<div style="left:811px;top:66px;width:1px;height:25px;background:#cbcbcb"></div>
<svg style="left:824px;top:71px" width="16" height="16" viewBox="0 0 16 16"><rect x="1" y="1" width="14" height="14" rx="4.200" fill="#1669b2"/><text x="8" y="13" text-anchor="middle" font-family="Liberation Serif, serif" font-size="13.500" font-weight="700" fill="#fff">i</text></svg>
<svg style="left:1236px;top:71px" width="17" height="17" viewBox="0 0 17 17"><circle cx="6.600" cy="6.600" r="4.300" fill="none" stroke="#6c6c6c" stroke-width="1.800"/><path d="M9.800 9.800L14.800 14.800" stroke="#6c6c6c" stroke-width="2.200" stroke-linecap="round"/></svg>
<div style="left:1273.3px;top:68.5px;width:1.3px;height:21px;background:repeating-linear-gradient(#9c9278 0 3px,transparent 3px 6px);opacity:.55"></div>
<svg style="left:1286px;top:70px" width="17" height="18" viewBox="0 0 17 18"><rect x="1.500" y="5.500" width="11" height="10.500" fill="#e4f0fb" stroke="#b9a06a"/><rect x="1" y="5" width="12" height="2.600" fill="#4a80c8"/><path d="M5.500 8V16M1.500 11.500H12.500" stroke="#b9a06a" stroke-width=".9"/><path d="M12.600 .600L16.400 4.400 12.600 8.200 8.800 4.400Z" fill="#f6d070" stroke="#c8921c" stroke-width=".9" stroke-linejoin="round"/><path d="M12.600 2.400V6.400M10.600 4.400H14.600" stroke="#fff" stroke-width="1.100"/></svg>
<div style="left:1314px;top:66px;width:1px;height:25px;background:#cbcbcb"></div>
<svg style="left:1327px;top:70.5px" width="18" height="17" viewBox="0 0 18 17"><rect x="1.500" y="1.500" width="11" height="10.500" fill="#f4f6fb" stroke="#8a8a9a"/><rect x="1" y="1" width="12" height="2.400" fill="#6a8ac8"/><path d="M5 3.500V12M1.500 7.500H12.500" stroke="#9a9aa8" stroke-width=".9"/><rect x="8.500" y="7.500" width="8.500" height="8.500" fill="#fdfbf2" stroke="#b9a06a"/><text x="12.800" y="14.800" text-anchor="middle" font-family="Liberation Sans, sans-serif" font-size="8.500" font-weight="700" fill="#2a5aaa">C</text></svg>
<div style="left:1349px;top:66px;width:25px;height:25px;border-radius:5px;background:#d7d7d7;box-sizing:border-box;border:1px solid #cdcdcd"></div>
<svg style="left:1353px;top:71px" width="17" height="17" viewBox="0 0 17 17"><g stroke="#2f7d68" stroke-width="1.100" fill="none" stroke-linecap="round" stroke-linejoin="round"><path d="M5.500 4.500V1.200M8.400 4.600L9.700 2.400M4 5.500H1.200M11 5.600H13L15 6.500M4.500 8.600L2 9.500M13.300 9.500H14.500L16 10.800M5.200 11.300L5.500 12.600 6.500 14.500M9.500 13.400V14.500L10.700 15.700"/></g><ellipse cx="9" cy="8.900" rx="3.100" ry="4.700" transform="rotate(-42 9 8.900)" fill="#b9dcae" stroke="#2a7f9a" stroke-width="1.050"/><ellipse cx="9.300" cy="9.300" rx="1.300" ry="2.800" transform="rotate(-42 9.300 9.300)" fill="#8fcf78"/><circle cx="5.800" cy="5.800" r="1.400" fill="#3f9a55" stroke="#1d7a9c" stroke-width=".7"/><circle cx="5.500" cy="5.500" r=".500" fill="#e8f8e0"/></svg>
<svg style="left:-4.6px;top:137.3px" width="19" height="17" viewBox="0 0 19 17"><text x="2.700" y="14.300" font-family="Liberation Serif, serif" font-size="17" font-weight="700" fill="#0a0a8c">i</text><path d="M7 8.200H11.500V5.400L16.800 9.400 11.500 13.400V10.600H7Z" fill="#e6d22a" stroke="#6e5f00" stroke-width=".8" stroke-linejoin="round"/></svg>
<svg style="left:72px;top:108.5px" width="12" height="15" viewBox="0 0 12 15"><path d="M.6 .6H7.6L11 4V13.6H.6Z" fill="#f3f6fb" stroke="#a8842e" stroke-width="1.100"/><path d="M7.6 .6V4H11" fill="#f3e3b0" stroke="#b7933a" stroke-width=".8"/><text transform="translate(3.500 11.500) scale(.780 .960)" font-family="Liberation Sans, sans-serif" font-size="11" font-weight="400" fill="#1d3557" stroke="#1d3557" stroke-width=".300">S</text><rect x="2" y="10.4" width="1.3" height="1.3" fill="#1d3557"/></svg>
<svg style="left:209px;top:108.5px" width="12" height="15" viewBox="0 0 12 15"><path d="M.6 .6H7.6L11 4V13.6H.6Z" fill="#f3f6fb" stroke="#a8842e" stroke-width="1.100"/><path d="M7.6 .6V4H11" fill="#f3e3b0" stroke="#b7933a" stroke-width=".8"/><text transform="translate(3.500 11.500) scale(.780 .960)" font-family="Liberation Sans, sans-serif" font-size="11" font-weight="400" fill="#1d3557" stroke="#1d3557" stroke-width=".300">S</text><rect x="2" y="10.4" width="1.3" height="1.3" fill="#1d3557"/></svg>
<svg style="left:752px;top:108px" width="18" height="14" viewBox="0 0 18 14"><text x=".700" y="10.300" font-family="Liberation Sans, sans-serif" font-size="9.200" fill="#3d8fcb" stroke="#3d8fcb" stroke-width=".350" textLength="16.600" lengthAdjust="spacingAndGlyphs">(x)=</text></svg>
<svg style="left:822px;top:109px" width="16" height="13" viewBox="0 0 16 13"><circle cx="4" cy="4" r="3" fill="url(#gd)" stroke="#3a78b4" stroke-width=".6"/><circle cx="11.800" cy="9.300" r="3" fill="url(#gd)" stroke="#3a78b4" stroke-width=".6"/></svg>
<svg style="left:889.5px;top:108.5px" width="17" height="15" viewBox="0 0 17 15"><g fill="none" stroke="#3d8fcb" stroke-width="1.200" stroke-linecap="round"><circle cx="3" cy="6.900" r="2.100" fill="#fff" fill-opacity=".75"/><circle cx="10.100" cy="6.900" r="2.100" fill="#fff" fill-opacity=".75"/><path d="M5.100 6.200H8M1.900 4.700L5.600 .900Q6.900 .500 6.900 2.600M11.700 4.500L14.800 1.300Q16 1 16 4"/></g><text x="5.400" y="13.500" font-family="Liberation Sans, sans-serif" font-size="6.200" font-weight="700" fill="#3d8fcb" textLength="8.400" lengthAdjust="spacingAndGlyphs">x=</text></svg>
<svg style="left:957px;top:109px" width="17" height="13" viewBox="0 0 17 13"><rect x="1" y="1.600" width="9.500" height="3" fill="#3a6ea8" stroke="#2a5488" stroke-width=".6"/><rect x="1.600" y="4.800" width="9" height="3.200" fill="#3f9a5e" stroke="#2a7444" stroke-width=".6"/><rect x="1" y="8.200" width="10" height="3.600" fill="#d86a34" stroke="#a84a1c" stroke-width=".6"/><path d="M10.600 1.400L12.400 .600 15.400 11.400 13.400 12Z" fill="#f2b23a" stroke="#c07c14" stroke-width=".6"/></svg>
<svg style="left:1028px;top:110px" width="18" height="12" viewBox="0 0 18 12"><g stroke="#1c2c9a" stroke-width="1.500"><path d="M1 1.800H5M6.200 1.800H9.200M10.400 1.800H13M14.200 1.800H16M1 4.800H4M5.200 4.800H9M10.200 4.800H12.600M13.800 4.800H15M1 7.800H12"/></g><path d="M1 10.400H12" stroke="#5a7ad8" stroke-width="1.200" stroke-dasharray="1 .6"/></svg>
<svg style="left:1098px;top:109px" width="17" height="13" viewBox="0 0 17 13"><g font-family="Liberation Sans, sans-serif" font-size="6.800" fill="#4a9ad4" font-weight="700"><text x=".4" y="6" textLength="15.500" lengthAdjust="spacingAndGlyphs">1010</text><text x=".4" y="12.400" textLength="15.500" lengthAdjust="spacingAndGlyphs">0101</text></g></svg>
<svg style="left:1165.5px;top:108.5px" width="17" height="15" viewBox="0 0 17 15"><g fill="none" stroke="#1f3558" stroke-width="1.200" stroke-linecap="round"><circle cx="3" cy="6.900" r="2.100" fill="#fff" fill-opacity=".75"/><circle cx="10.100" cy="6.900" r="2.100" fill="#fff" fill-opacity=".75"/><path d="M5.100 6.200H8M1.900 4.700L5.600 .900Q6.900 .500 6.900 2.600M11.700 4.500L14.800 1.300Q16 1 16 4"/></g><text x="5.400" y="13.500" font-family="Liberation Sans, sans-serif" font-size="6.200" font-weight="700" fill="#1f3558" textLength="8.400" lengthAdjust="spacingAndGlyphs">x=</text></svg>
<svg style="left:1253px;top:110px" width="17" height="11" viewBox="0 0 17 11"><rect x="1" y="1" width="15" height="7" fill="#4aa84e" stroke="#2e7e34" stroke-width=".8"/><path d="M3 3H5.600V5.400H3ZM7.200 3H9.800V5.400H7.200ZM11.400 3H14V5.400H11.400Z" fill="#7a1c3c"/><path d="M2 8.500V10M4.400 8.500V10M6.800 8.500V10M9.200 8.500V10M11.600 8.500V10M14 8.500V10" stroke="#c8a83a" stroke-width="1.300"/></svg>
<svg style="left:1295px;top:140.5px" width="13" height="13" viewBox="0 0 13 13"><path d="M.800 2.800L2.800 .800 6.500 4.200 10.200 .800 12.200 2.800 8.800 6.500 12.200 10.200 10.200 12.200 6.500 8.800 2.800 12.200 .800 10.200 4.200 6.500Z" fill="#787878" stroke="#626262" stroke-width=".9" stroke-linejoin="round"/></svg>
<svg style="left:1320px;top:138.5px" width="17" height="18" viewBox="0 0 17 18"><path d="M1 2.600L2.600 1 5.500 3.700 8.400 1 10 2.600 7.300 5.500 10 8.400 8.400 10 5.500 7.300 2.600 10 1 8.400 3.700 5.500Z" fill="#efefef" stroke="#8a8a8a" stroke-width=".9" stroke-linejoin="round"/><path d="M4.400 7.400L6.300 5.500 10 8.900 13.700 5.500 15.600 7.400 12.200 11 15.600 14.600 13.700 16.500 10 13.100 6.300 16.500 4.400 14.600 7.800 11Z" fill="#787878" stroke="#626262" stroke-width=".9" stroke-linejoin="round"/></svg>
<svg style="left:759px;top:205px" width="7" height="11" viewBox="0 0 7 11"><path d="M1 .800L5.800 5.500 1 10.200" fill="none" stroke="#666" stroke-width="1.100"/></svg>
<svg style="left:774px;top:205.8px" width="11" height="10" viewBox="0 0 11 10"><path d="M.400 3.100H4.800V.300L10.100 5 4.800 9.700V6.900H.400Z" fill="#1c2d52"/></svg>
<svg style="left:759px;top:228px" width="7" height="11" viewBox="0 0 7 11"><path d="M1 .800L5.800 5.500 1 10.200" fill="none" stroke="#666" stroke-width="1.100"/></svg>
<svg style="left:774px;top:228.8px" width="11" height="10" viewBox="0 0 11 10"><path d="M.400 3.100H4.800V.300L10.100 5 4.800 9.700V6.900H.400Z" fill="#1c2d52"/></svg>
<svg style="left:759px;top:251px" width="7" height="11" viewBox="0 0 7 11"><path d="M1 .800L5.800 5.500 1 10.200" fill="none" stroke="#666" stroke-width="1.100"/></svg>
<svg style="left:774px;top:251.8px" width="11" height="10" viewBox="0 0 11 10"><path d="M.400 3.100H4.800V.300L10.100 5 4.800 9.700V6.900H.400Z" fill="#1c2d52"/></svg>
<svg style="left:756px;top:277px" width="12" height="7" viewBox="0 0 12 7"><path d="M.800 .800L6 5.800 11.200 .800" fill="none" stroke="#fbd9cc" stroke-width="1.100"/></svg>
<svg style="left:773px;top:273.8px" width="13" height="12" viewBox="0 0 13 12"><path d="M1.400 4.100H5.800V1.300L11.100 6 5.800 10.700V7.900H1.400Z" fill="#1c2d52" stroke="#fff" stroke-width="1.200" stroke-linejoin="round" paint-order="stroke"/></svg>
<svg style="left:789px;top:296px" width="18" height="12" viewBox="0 0 18 12"><text x=".3" y="9.600" font-family="Liberation Sans, sans-serif" font-size="9.200" font-weight="700" fill="#1f3558" stroke="#1f3558" stroke-width=".250" textLength="16.200" lengthAdjust="spacingAndGlyphs">(x)=</text></svg>
<svg style="left:773.5px;top:318.5px" width="13" height="13" viewBox="0 0 13 13"><path d="M4.700 .900H8.300V4.700H12.100V8.300H8.300V12.100H4.700V8.300H.900V4.700H4.700Z" fill="url(#gp)" stroke="#6f9a14" stroke-width=".9" stroke-linejoin="round"/></svg>
<svg style="left:70px;top:664px" width="15" height="15" viewBox="0 0 15 15"><rect x="1.850" y="1.750" width="11.300" height="9.100" rx="1" fill="#fff" stroke="#2b62b0" stroke-width="1.700"/><rect x="3" y="2.900" width="9" height="6.800" fill="none" stroke="#8a98b4" stroke-width=".600"/><path d="M4.200 5.400H9M4.200 7.500H10.800" stroke="#2a3a8a" stroke-width="1"/><path d="M5.500 11.700H10V12.900H13V14H2V12.900H5.500Z" fill="#2b62b0"/></svg>
<svg style="left:151.5px;top:663.5px" width="16" height="16" viewBox="0 0 16 16"><path d="M.900 .900H11.600Q14.800 3.500 13 6.600 11.400 9.800 14.600 15H.900Z" fill="#eaf4fc"/><path d="M11.600 .900Q14.800 3.500 13 6.600 11.400 9.800 14.600 15" fill="none" stroke="#9aaac8" stroke-width=".800"/><path d="M9.900 1V15M1 7.900H12.600" stroke="#a8bce0" stroke-width=".900"/><path d="M.900 15V.900H11.600" fill="none" stroke="#a09040" stroke-width="1"/><path d="M.900 8V15H14.600" fill="none" stroke="#3a4a7a" stroke-width="1.100"/><circle cx="6" cy="4.900" r="2.500" fill="#e62a2a"/><circle cx="6" cy="4.400" r="1.200" fill="#f05050"/><path d="M3.500 14.500V12.400A2.500 2.500 0 0 1 8.500 12.400V14.500Z" fill="#f8a818"/><path d="M4.600 13.600V12.600A1.400 1.400 0 0 1 7.400 12.600V13.600Z" fill="#fcd040"/></svg>
<svg style="left:246px;top:664px" width="16" height="16" viewBox="0 0 16 16"><circle cx="8" cy="7.600" r="6.800" fill="#7c9ad4" stroke="#4a68b0" stroke-width="1"/><circle cx="7.400" cy="7" r="5" fill="#a8bde6" opacity=".7"/><path d="M5.800 3.600L11.600 7.600 5.800 11.600Z" fill="#fff"/></svg>
<svg style="left:357px;top:664px" width="17" height="17" viewBox="0 0 17 17"><rect x="1.850" y="1.850" width="11.300" height="9" rx="1" fill="#fff" stroke="#2b62b0" stroke-width="1.700"/><rect x="3" y="3" width="9" height="6.700" fill="none" stroke="#8a98b4" stroke-width=".600"/><path d="M4.200 5.500H8M4.200 7.300H7" stroke="#4a5aa8" stroke-width=".900"/><path d="M2 13.300H7" stroke="#2b62b0" stroke-width="1.300"/><g stroke="#1e5e3e" stroke-width="1" stroke-linecap="round"><path d="M8.700 7.600V4.400M11.600 8V5.600M7.200 9.200L4.600 8.400M7.600 12L5.600 12.600M8.800 14L8.400 15.800M13.600 8.600L14.400 7.400"/></g><ellipse cx="11.800" cy="11.600" rx="3" ry="4.200" transform="rotate(-40 11.800 11.600)" fill="#b8dca8" stroke="#1a7a8a" stroke-width="1"/><ellipse cx="12" cy="12" rx="1.200" ry="2.500" transform="rotate(-40 12 12)" fill="#8cc878"/><circle cx="8.600" cy="8.400" r="1.300" fill="#2a8a5a" stroke="#1a5a4a" stroke-width=".500"/><circle cx="6.800" cy="9.700" r=".700" fill="#111"/></svg>
<svg style="left:510px;top:664px" width="11" height="16" viewBox="0 0 11 16"><path d="M1.200 2.800V12.600C1.200 15.200 9.400 15.200 9.400 12.600V2.800" fill="url(#gb)" stroke="#3a68c0" stroke-width="1"/><ellipse cx="5.300" cy="2.800" rx="4.100" ry="1.900" fill="#c4d8f6" stroke="#3a68c0" stroke-width="1"/></svg>
<svg style="left:345.5px;top:699px" width="13" height="13" viewBox="0 0 13 13"><path d="M4.700 .900H8.300V4.700H12.100V8.300H8.300V12.100H4.700V8.300H.900V4.700H4.700Z" fill="url(#gp)" stroke="#6f9a14" stroke-width=".9" stroke-linejoin="round"/></svg>
<svg style="left:374px;top:698.3px" width="13" height="13" viewBox="0 0 13 13"><path d="M.800 2.800L2.800 .800 6.500 4.200 10.200 .800 12.200 2.800 8.800 6.500 12.200 10.200 10.200 12.200 6.500 8.800 2.800 12.200 .800 10.200 4.200 6.500Z" fill="#787878" stroke="#626262" stroke-width=".9" stroke-linejoin="round"/></svg>
<svg style="left:399px;top:696px" width="17" height="18" viewBox="0 0 17 18"><path d="M1 2.600L2.600 1 5.500 3.700 8.400 1 10 2.600 7.300 5.500 10 8.400 8.400 10 5.500 7.300 2.600 10 1 8.400 3.700 5.500Z" fill="#efefef" stroke="#8a8a8a" stroke-width=".9" stroke-linejoin="round"/><path d="M4.400 7.400L6.300 5.500 10 8.900 13.700 5.500 15.600 7.400 12.200 11 15.600 14.600 13.700 16.500 10 13.100 6.300 16.500 4.400 14.600 7.800 11Z" fill="#787878" stroke="#626262" stroke-width=".9" stroke-linejoin="round"/></svg>
<svg style="left:90px;top:728.6px" width="10" height="10" viewBox="0 0 10 10"><path d="M5 .300L9.700 5 5 9.700 .300 5Z" fill="#3f7fbd" stroke="#2d5f96" stroke-width=".5"/><path d="M5 .300L9.700 5H5Z" fill="#4f8cc6"/><path d="M5 .300L.300 5H5Z" fill="#7fb0de"/><path d="M.300 5L5 9.700V5Z" fill="#3f7fbd"/><path d="M9.700 5L5 9.700V5Z" fill="#2a67a6"/><circle cx="5" cy="4.800" r="1.600" fill="#cfe4f6" opacity=".55"/></svg>
<svg style="left:90px;top:751.6px" width="10" height="10" viewBox="0 0 10 10"><path d="M5 .300L9.700 5 5 9.700 .300 5Z" fill="#3f7fbd" stroke="#2d5f96" stroke-width=".5"/><path d="M5 .300L9.700 5H5Z" fill="#4f8cc6"/><path d="M5 .300L.300 5H5Z" fill="#7fb0de"/><path d="M.300 5L5 9.700V5Z" fill="#3f7fbd"/><path d="M9.700 5L5 9.700V5Z" fill="#2a67a6"/><circle cx="5" cy="4.800" r="1.600" fill="#cfe4f6" opacity=".55"/></svg>
<svg style="left:90px;top:774.6px" width="10" height="10" viewBox="0 0 10 10"><path d="M5 .300L9.700 5 5 9.700 .300 5Z" fill="#3f7fbd" stroke="#2d5f96" stroke-width=".5"/><path d="M5 .300L9.700 5H5Z" fill="#4f8cc6"/><path d="M5 .300L.300 5H5Z" fill="#7fb0de"/><path d="M.300 5L5 9.700V5Z" fill="#3f7fbd"/><path d="M9.700 5L5 9.700V5Z" fill="#2a67a6"/><circle cx="5" cy="4.800" r="1.600" fill="#cfe4f6" opacity=".55"/></svg>
<svg style="left:90px;top:797.6px" width="10" height="10" viewBox="0 0 10 10"><path d="M5 .300L9.700 5 5 9.700 .300 5Z" fill="#3f7fbd" stroke="#2d5f96" stroke-width=".5"/><path d="M5 .300L9.700 5H5Z" fill="#4f8cc6"/><path d="M5 .300L.300 5H5Z" fill="#7fb0de"/><path d="M.300 5L5 9.700V5Z" fill="#3f7fbd"/><path d="M9.700 5L5 9.700V5Z" fill="#2a67a6"/><circle cx="5" cy="4.800" r="1.600" fill="#cfe4f6" opacity=".55"/></svg>
<svg style="left:90px;top:820.6px" width="10" height="10" viewBox="0 0 10 10"><path d="M5 .300L9.700 5 5 9.700 .300 5Z" fill="#3f7fbd" stroke="#2d5f96" stroke-width=".5"/><path d="M5 .300L9.700 5H5Z" fill="#4f8cc6"/><path d="M5 .300L.300 5H5Z" fill="#7fb0de"/><path d="M.300 5L5 9.700V5Z" fill="#3f7fbd"/><path d="M9.700 5L5 9.700V5Z" fill="#2a67a6"/><circle cx="5" cy="4.800" r="1.600" fill="#cfe4f6" opacity=".55"/></svg>
<svg style="left:686.7px;top:695px" width="13" height="13" viewBox="0 0 13 13"><path d="M4.700 .900H8.300V4.700H12.100V8.300H8.300V12.100H4.700V8.300H.900V4.700H4.700Z" fill="url(#gp)" stroke="#6f9a14" stroke-width=".9" stroke-linejoin="round"/></svg>
<svg style="left:1005px;top:663px" width="20" height="17" viewBox="0 0 20 17"><text x="2" y="9.300" font-family="Liberation Sans, sans-serif" font-size="7.600" font-weight="700" fill="#1c2d6a" textLength="15.200" lengthAdjust="spacingAndGlyphs">1010</text><path d="M17.200 10V15H12.200Z" fill="#3a78c0"/></svg>
<svg style="left:1032px;top:663px" width="20" height="17" viewBox="0 0 20 17"><text x="2" y="9.300" font-family="Liberation Sans, sans-serif" font-size="7.600" font-weight="700" fill="#1c2d6a" textLength="15.200" lengthAdjust="spacingAndGlyphs">1010</text><path d="M2 11H7L2 16Z" fill="#3a78c0"/></svg>
<svg style="left:1062px;top:662.5px" width="16" height="17" viewBox="0 0 16 17"><path d="M2.500 3.500H10.500V15.500H2.500Z" fill="#f0f3fa" stroke="#c0aa72"/><path d="M11.500 .800V7.200M8.300 4H14.700" stroke="#e0b030" stroke-width="2.200"/><path d="M11.500 1.600V6.400M9.100 4H13.900" stroke="#fff0a8" stroke-width=".8"/></svg>
<svg style="left:1088px;top:662px" width="18" height="18" viewBox="0 0 18 18"><rect x="1.500" y="7.500" width="12" height="8.500" fill="#f6f8fc" stroke="#b9a06a"/><rect x="1" y="7" width="13" height="2.600" fill="#3a76c2"/><path d="M8.600 10.800L10.800 8.600" stroke="#555" stroke-width=".9"/><path d="M10 6.400L12.600 3 15.800 5.600 13 9Z" fill="#3c9a44" stroke="#1e6e2a" stroke-width=".8" stroke-linejoin="round"/><circle cx="14.200" cy="3.600" r="1.800" fill="#54b45c" stroke="#1e6e2a" stroke-width=".6"/></svg>
<div style="left:1116px;top:658px;width:1px;height:26px;background:#cdcdcd"></div>
<div style="left:1124px;top:658px;width:26px;height:26px;border-radius:6px;background:#d7d7d7;box-sizing:border-box;border:1px solid #cbcbcb"></div>
<svg style="left:1128px;top:663px" width="19" height="17" viewBox="0 0 19 17"><path d="M1 7H5V5L8.600 8.200 5 11.400V9.400H1Z" fill="#f8e27a" stroke="#c89a1c" stroke-width=".8" stroke-linejoin="round"/><path d="M11.800 15.500V4.500M11.800 9H15M11.800 13.500H15" stroke="#3a5cae" stroke-width="1.100" fill="none"/><path d="M9.600 5.200L11.800 1.800 14 5.200Z" fill="#3a5cae"/><rect x="14.300" y="7.600" width="3" height="3" fill="#fbd0d4" stroke="#d8404c" stroke-width=".8"/><rect x="14.300" y="12" width="3" height="3" fill="#fbd0d4" stroke="#d8404c" stroke-width=".8"/><path d="M14.500 3.500H17.500" stroke="#7a8ad0" stroke-width=".9"/></svg>
<div style="left:1157px;top:658px;width:1px;height:26px;background:#cdcdcd"></div>
<svg style="left:1171px;top:663px" width="15" height="17" viewBox="0 0 15 17"><rect x=".700" y="1" width="13" height="14.600" fill="#dfe7f4" stroke="#c0aa72" stroke-width=".9"/><path d="M7.200 1V15.600" stroke="#8a9ac0" stroke-width=".9"/><g fill="#4aa84e" stroke="#2e7e34" stroke-width=".5"><circle cx="4" cy="4.200" r="1.500"/><circle cx="4" cy="8.300" r="1.500"/><circle cx="4" cy="12.400" r="1.500"/></g><path d="M9 5.400L10.400 3 11.800 5.400ZM9 11.400L10.400 13.800 11.800 11.400Z" fill="#3a78c0"/><rect x="9" y="7" width="2.800" height="2.600" fill="#e8404c"/></svg>
<div style="left:1192px;top:658px;width:26px;height:26px;border-radius:6px;background:#d7d7d7;box-sizing:border-box;border:1px solid #cbcbcb"></div>
<svg style="left:1196px;top:662px" width="19" height="18" viewBox="0 0 19 18"><path d="M1 5L5.600 1.200V3.400H12V6.600H5.600V8.800Z" fill="#fff4d4" stroke="#cf8e12" stroke-width="1.150" stroke-linejoin="round"/><path d="M17.400 12L12.800 8.200V10.400H4.500V13.600H12.800V15.800Z" fill="#fff4d4" stroke="#cf8e12" stroke-width="1.150" stroke-linejoin="round"/></svg>
<div style="left:1225px;top:658px;width:1px;height:26px;background:#cdcdcd"></div>
<svg style="left:1239px;top:663px" width="16" height="17" viewBox="0 0 16 17"><g fill="#f6c45a" stroke="#b9903a" stroke-width=".8"><rect x="1" y="1.400" width="3.600" height="3.600"/><rect x="6.800" y="1.400" width="3.600" height="3.600" fill="#f8d894"/><rect x="1" y="7" width="3.600" height="3.600"/></g><path d="M7.200 8.400V14C7.200 16 12.800 16 12.800 14V8.400" fill="url(#gb)" stroke="#3a68b4" stroke-width=".9"/><ellipse cx="10" cy="8.400" rx="2.800" ry="1.400" fill="#cfe0f8" stroke="#3a68b4" stroke-width=".9"/></svg>
<svg style="left:1263px;top:668.5px" width="11" height="7" viewBox="0 0 11 7"><path d="M.6 .8L5.5 5.6 10.4 .8" fill="none" stroke="#444" stroke-width="1.3"/></svg>
<div style="left:1281px;top:656px;width:3px;height:31px;background:#e3e3e3"></div>
</div></body></html>
